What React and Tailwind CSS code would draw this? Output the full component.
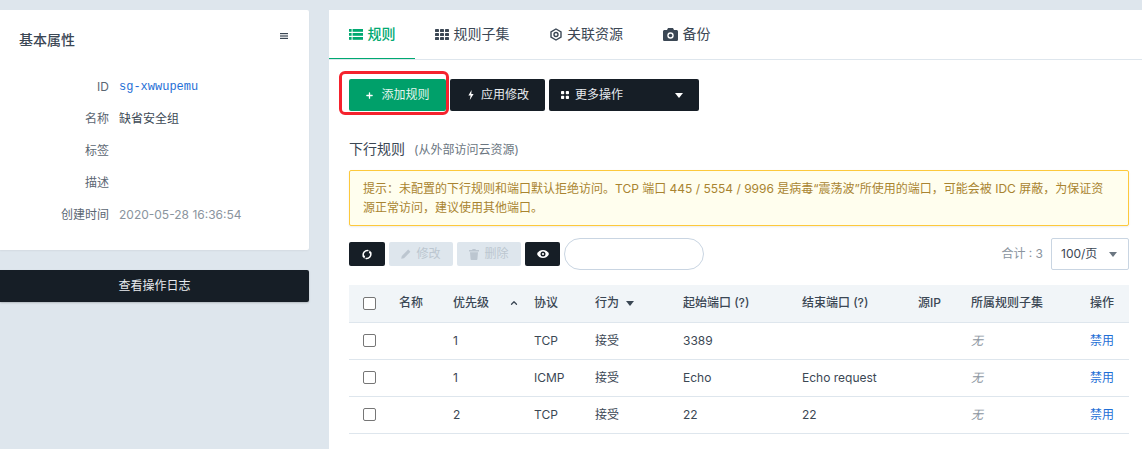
import React from "react";
import { Plus, ChevronUp } from "lucide-react";

const FONT = "font-['Inter','Noto_Sans_CJK_SC',sans-serif]";

function Tab({ icon, label, active, w }) {
  return (
    <div className={`${w} h-[49px] flex items-center justify-center gap-[5px] text-sm border-b ${active ? "border-[#00a971] text-[#00a971] font-medium" : "border-transparent text-[#3b4754]"}`}>
      {icon}
      <span>{label}</span>
    </div>
  );
}

function Prop({ k, children, cls = "text-[#3b4754]" }) {
  return (
    <div className="flex h-[32px] items-center text-xs">
      <div className="w-[109px] text-right text-[#5b6672]">{k}</div>
      <div className={`ml-[10px] ${cls}`}>{children}</div>
    </div>
  );
}

const Caret = ({ cls = "" }) => <span className={`inline-block w-0 h-0 border-x-[4px] border-x-transparent border-t-[5px] ${cls}`} />;

function ListIcon() {
  return (
    <svg width="14" height="11" viewBox="0 0 14 11" fill="#00a971">
      {[0, 4, 8].map((y) => (
        <g key={y}>
          <rect y={y} width="2.6" height="2.8" />
          <rect x="3.6" y={y} width="10.4" height="2.8" />
        </g>
      ))}
    </svg>
  );
}

function GridIcon() {
  return (
    <svg width="14" height="11" viewBox="0 0 14 11" fill="#3b4754">
      {[0, 4, 8].map((y) =>
        [0, 5, 10].map((x) => <rect key={`${x}-${y}`} x={x} y={y} width="4" height="3" rx=".4" />)
      )}
    </svg>
  );
}

function HexIcon() {
  return (
    <svg width="12" height="13" viewBox="0 0 12 13" fill="none" stroke="#3b4754" strokeWidth="1.4">
      <path d="M6 1 11 3.8v5.4L6 12 1 9.2V3.8z" />
      <circle cx="6" cy="6.5" r="2" />
    </svg>
  );
}

function CameraIcon() {
  return (
    <svg width="15" height="13" viewBox="0 0 15 13">
      <path fill="#3b4754" d="M5 0h5l1 2h2.4C14.3 2 15 2.7 15 3.6v7.8c0 .9-.7 1.6-1.6 1.6H1.6C.7 13 0 12.3 0 11.4V3.6C0 2.7.7 2 1.6 2H4z" />
      <circle cx="7.5" cy="7.5" r="3.2" fill="#fff" />
      <circle cx="7.5" cy="7.5" r="1.8" fill="#3b4754" />
    </svg>
  );
}

function BoltIcon() {
  return (
    <svg width="6" height="10" viewBox="0 0 6 10" fill="#fff">
      <path d="M3.6 0 .4 5.6H2.6L1.8 10 5.6 3.9H3.3z" />
    </svg>
  );
}

function SyncIcon() {
  return (
    <svg width="10" height="11" viewBox="0 0 10 11">
      <g fill="none" stroke="#fff" strokeWidth="1.5">
        <path d="M6.5 1.600A4.200 4.200 0 0 0 1.600 7.400" />
        <path d="M3.500 9.400A4.200 4.200 0 0 0 8.400 3.600" />
      </g>
      <path fill="#fff" d="M.1 6.800h3.100L2.300 9.700zM9.900 4.200H6.800L7.700 1.300z" />
    </svg>
  );
}

function PencilIcon() {
  return (
    <svg width="10" height="10" viewBox="0 0 10 10" fill="#bcc6d0">
      <path d="M7.2.6 9.4 2.8 3 9.2.2 9.8.8 7z" />
    </svg>
  );
}

function TrashIcon() {
  return (
    <svg width="10" height="11" viewBox="0 0 10 11" fill="#bcc6d0">
      <path d="M3.6 0h2.8l.5 1H10v1.400H0V1h3.100z" />
      <path d="M1 3.200h8l-.6 7c0 .4-.4.8-.8.8H2.400c-.4 0-.8-.4-.8-.8z" />
    </svg>
  );
}

function EyeIcon() {
  return (
    <svg width="12" height="8" viewBox="0 0 12 8">
      <path fill="#fff" d="M6 0c2.700 0 4.900 1.600 6 4-1.100 2.400-3.300 4-6 4S1.100 6.400 0 4c1.100-2.400 3.300-4 6-4z" />
      <circle cx="6" cy="4" r="2.500" fill="#161e26" />
      <circle cx="6" cy="4" r="1.100" fill="#fff" />
    </svg>
  );
}

function Squares() {
  return (
    <svg width="8" height="8" viewBox="0 0 8 8" fill="#fff">
      <rect width="3.200" height="3.200" rx=".8" />
      <rect x="4.800" width="3.200" height="3.200" rx=".8" />
      <rect y="4.800" width="3.200" height="3.200" rx=".8" />
      <rect x="4.800" y="4.800" width="3.200" height="3.200" rx=".8" />
    </svg>
  );
}

function Check() {
  return <span className="block w-[13px] h-[13px] rounded-[2px] border border-[#767676] bg-white" />;
}

const rows = [
  ["1", "TCP", "3389", ""],
  ["1", "ICMP", "Echo", "Echo request"],
  ["2", "TCP", "22", "22"],
];

const th = "p-0 pl-[14px] font-medium text-xs text-left text-[#3b4754] whitespace-nowrap";
const td = "p-0 pl-[14px] text-xs text-[#3b4754] whitespace-nowrap";

export default function App() {
  return (
    <div className={`${FONT} w-[1142px] h-[449px] overflow-hidden bg-[#dee6ed] flex pt-[10px] gap-[20px]`}>
      <div className="w-[309px] shrink-0 flex flex-col gap-[20px]">
        <div className="h-[240px] bg-white rounded-r-[2px] shadow-[0_1px_2px_rgba(0,0,0,0.05)]">
          <div className="flex justify-between pl-[19px] pr-[21px] h-[61px] pt-[21px]">
            <h2 className="text-sm leading-[18px] font-medium text-[#3b4754]">基本属性</h2>
            <svg width="8" height="6" viewBox="0 0 8 6" className="mt-[2px]" fill="#3b4754">
              <rect width="8" height="1.200" /><rect y="2.400" width="8" height="1.200" /><rect y="4.800" width="8" height="1.200" />
            </svg>
          </div>
          <Prop k="ID" cls="font-['Liberation_Mono',monospace] text-[#1f6fd6] text-xs">sg-xwwupemu</Prop>
          <Prop k="名称">缺省安全组</Prop>
          <Prop k="标签"></Prop>
          <Prop k="描述"></Prop>
          <Prop k="创建时间" cls="text-[#8a949e]">2020-05-28 16:36:54</Prop>
        </div>
        <div className="h-[32px] bg-[#161e26] text-[#e8ebee] text-xs rounded-r-[2px] flex items-center justify-center shadow-[0_1px_2px_rgba(0,0,0,0.2)]">查看操作日志</div>
      </div>

      <div className="w-[813px] bg-white">
        <div className="flex h-[49px] border-b border-[#dee6ed] box-content -mb-px">
          <Tab active w="w-[86px]" label="规则" icon={<ListIcon />} />
          <Tab w="w-[94px] ml-[10px]" label="规则子集" icon={<GridIcon />} />
          <Tab w="w-[113px] ml-[11px]" label="关联资源" icon={<HexIcon />} />
          <Tab w="w-[67px] ml-[10px]" label="备份" icon={<CameraIcon />} />
        </div>

        <div className="px-[20px] pr-[13px] pt-[20px]">
          <div className="flex items-center gap-[4px] h-[32px]">
            <div className="relative h-[32px] w-[97px] bg-[#00a06a] rounded-[2px] text-[#e6f6f0] text-xs flex items-center justify-center gap-[7px]">
              <Plus size={9} strokeWidth={3.5} className="text-white" />
              添加规则
              <div className="absolute -left-[10px] -top-[8px] -right-[3px] -bottom-[4px] border-[3px] border-[#f5222d] rounded-[6px]" />
            </div>
            <div className="h-[32px] w-[95px] bg-[#161e26] rounded-[2px] text-[#e8ebee] text-xs flex items-center justify-center gap-[7px] pl-[2px]">
              <BoltIcon />
              应用修改
            </div>
            <div className="h-[32px] w-[150px] bg-[#161e26] rounded-[2px] text-[#e8ebee] text-xs flex items-center pl-[12px] pr-[16px]">
              <Squares />
              <span className="ml-[6px]">更多操作</span>
              <Caret cls="ml-auto border-t-white" />
            </div>
          </div>

          <div className="mt-[28px] flex items-baseline h-[20px]">
            <span className="text-sm text-[#3b4754]">下行规则</span>
            <span className="ml-[9px] text-xs text-[#6b7681]">(从外部访问云资源)</span>
          </div>

          <div className="mt-[11px] h-[56px] border border-[#fdc93c] bg-[#fffeee] rounded-[2px] pl-[13px] pt-[8px] text-xs leading-[19px] text-[#a98430] whitespace-nowrap shadow-[0_1px_2px_rgba(0,0,0,0.08)]">
            提示：未配置的下行规则和端口默认拒绝访问。TCP 端口 445 / 5554 / 9996 是病毒“震荡波”所使用的端口，可能会被 IDC 屏蔽，为保证资<br />源正常访问，建议使用其他端口。
          </div>

          <div className="mt-[12px] flex items-center h-[32px]">
            <div className="w-[36px] h-[24px] bg-[#161e26] rounded-[2px] flex items-center justify-center"><SyncIcon /></div>
            <div className="ml-[4px] w-[64px] h-[24px] bg-[#dee6ed] rounded-[2px] flex items-center justify-center gap-[5px] text-xs text-[#bcc6d0]"><PencilIcon />修改</div>
            <div className="ml-[4px] w-[64px] h-[24px] bg-[#dee6ed] rounded-[2px] flex items-center justify-center gap-[5px] text-xs text-[#bcc6d0]"><TrashIcon />删除</div>
            <div className="ml-[4px] w-[35px] h-[24px] bg-[#161e26] rounded-[2px] flex items-center justify-center"><EyeIcon /></div>
            <input aria-label="search" className="ml-[4px] w-[140px] h-[32px] rounded-[16px] border border-[#c9d5e2] bg-white" />
            <span className="ml-auto text-xs text-[#8a949e]">合计 : 3</span>
            <div className="ml-[8px] w-[78px] h-[32px] border border-[#c9d5e2] rounded-[2px] flex items-center pl-[9px] pr-[11px] text-xs text-[#3b4754]">
              100/页
              <Caret cls="ml-auto border-t-[#6b7681]" />
            </div>
          </div>

          <table className="mt-[15px] w-[780px] table-fixed border-collapse">
            <colgroup>
              <col className="w-[36px]" /><col className="w-[54px]" /><col className="w-[81px]" /><col className="w-[61px]" /><col className="w-[88px]" />
              <col className="w-[119px]" /><col className="w-[116px]" /><col className="w-[53px]" /><col className="w-[119px]" /><col className="w-[53px]" />
            </colgroup>
            <thead>
              <tr className="h-[37px] bg-[#f1f5f8] border-b border-[#dee6ed]">
                <th className={th}><Check /></th>
                <th className={th}>名称</th>
                <th className={th}>
                  <div className="flex items-center justify-between pr-[1px]">优先级<ChevronUp size={10} strokeWidth={3} /></div>
                </th>
                <th className={th}>协议</th>
                <th className={th}>行为<Caret cls="ml-[7px] mb-[1px] border-t-[#3b4754]" /></th>
                <th className={th}>起始端口 (?)</th>
                <th className={th}>结束端口 (?)</th>
                <th className={th}>源IP</th>
                <th className={th}>所属规则子集</th>
                <th className={th}>操作</th>
              </tr>
            </thead>
            <tbody>
              {rows.map((r, i) => (
                <tr key={i} className="h-[37px] border-b border-[#dee6ed]">
                  <td className={td}><Check /></td>
                  <td className={td}></td>
                  <td className={td}>{r[0]}</td>
                  <td className={td}>{r[1]}</td>
                  <td className={td}>接受</td>
                  <td className={td}>{r[2]}</td>
                  <td className={td}>{r[3]}</td>
                  <td className={td}></td>
                  <td className={`${td} italic !text-[#8a949e]`}>无</td>
                  <td className={`${td} !text-[#1f6fd6]`}>禁用</td>
                </tr>
              ))}
            </tbody>
          </table>
        </div>
      </div>
    </div>
  );
}
